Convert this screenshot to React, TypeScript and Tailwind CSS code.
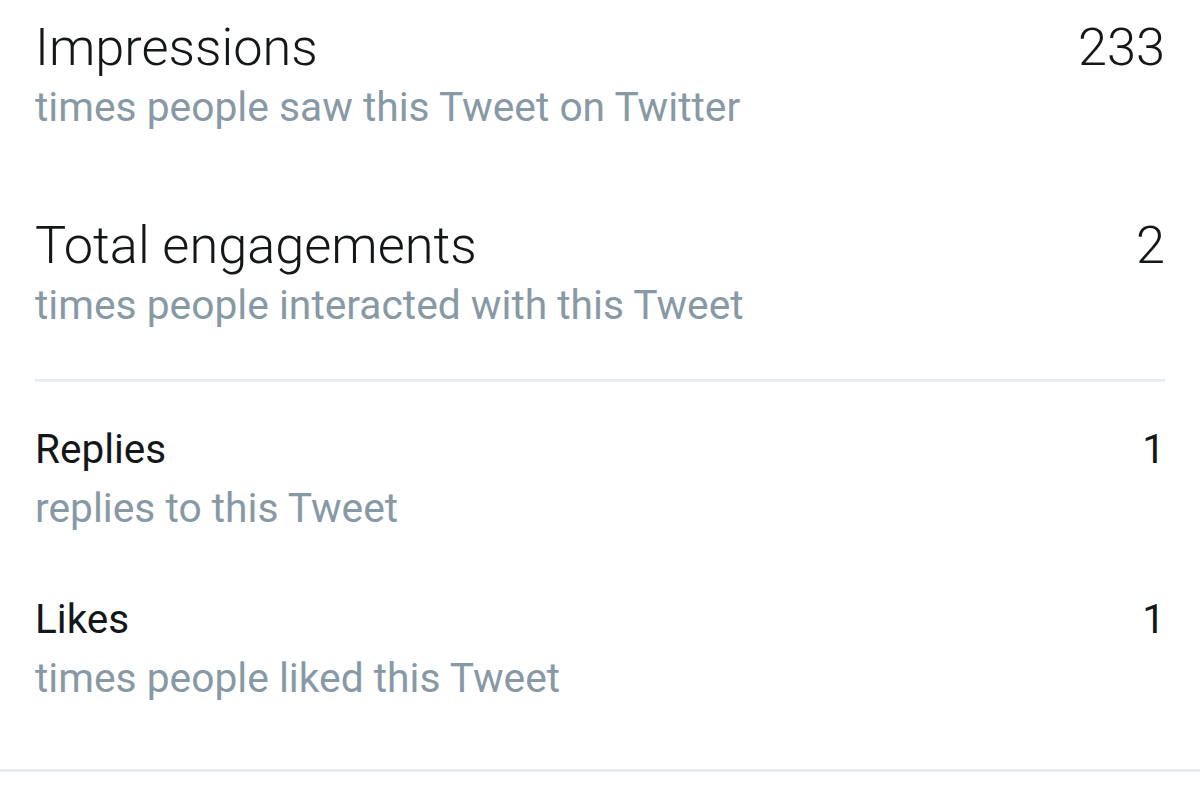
// Tweet activity: metric rows with a label, a caption and a count.

type Metric = {
  label: string;
  caption: string;
  value: number;
};

const primary: Metric[] = [
  { label: "Impressions", caption: "times people saw this Tweet on Twitter", value: 233 },
  { label: "Total engagements", caption: "times people interacted with this Tweet", value: 2 },
];

const secondary: Metric[] = [
  { label: "Replies", caption: "replies to this Tweet", value: 1 },
  { label: "Likes", caption: "times people liked this Tweet", value: 1 },
];

function PrimaryRow({ m }: { m: Metric }) {
  return (
    <div>
      <div className="flex items-baseline justify-between text-[52.3px] leading-[61px] font-light text-[#14171a]">
        <span>{m.label}</span>
        <span>{m.value}</span>
      </div>
      <div className="text-[40.75px] leading-[58px] text-[#8899a6]">{m.caption}</div>
    </div>
  );
}

function SecondaryRow({ m }: { m: Metric }) {
  return (
    <div>
      <div className="flex items-baseline justify-between text-[40.5px] leading-[60px] text-[#14171a]">
        <span>{m.label}</span>
        <span>{m.value}</span>
      </div>
      <div className="text-[40.75px] leading-[58px] text-[#8899a6]">{m.caption}</div>
    </div>
  );
}

export default function App() {
  return (
    <div
      className="w-[1200px] h-[795px] bg-white overflow-hidden"
      style={{ fontFamily: "Roboto, 'Liberation Sans', sans-serif" }}
    >
      <div className="px-[35px] pt-[17px]">
        <div className="flex flex-col gap-[79px]">
          {primary.map(m => (
            <PrimaryRow key={m.label} m={m} />
          ))}
        </div>
        <div className="mt-[45px] h-[3px] bg-[#e6ecf0]" />
        <div className="pt-[37px] flex flex-col gap-[52px]">
          {secondary.map(m => (
            <SecondaryRow key={m.label} m={m} />
          ))}
        </div>
      </div>
      <div className="mt-[62px] h-[3px] bg-[#e6ecf0]" />
    </div>
  );
}
